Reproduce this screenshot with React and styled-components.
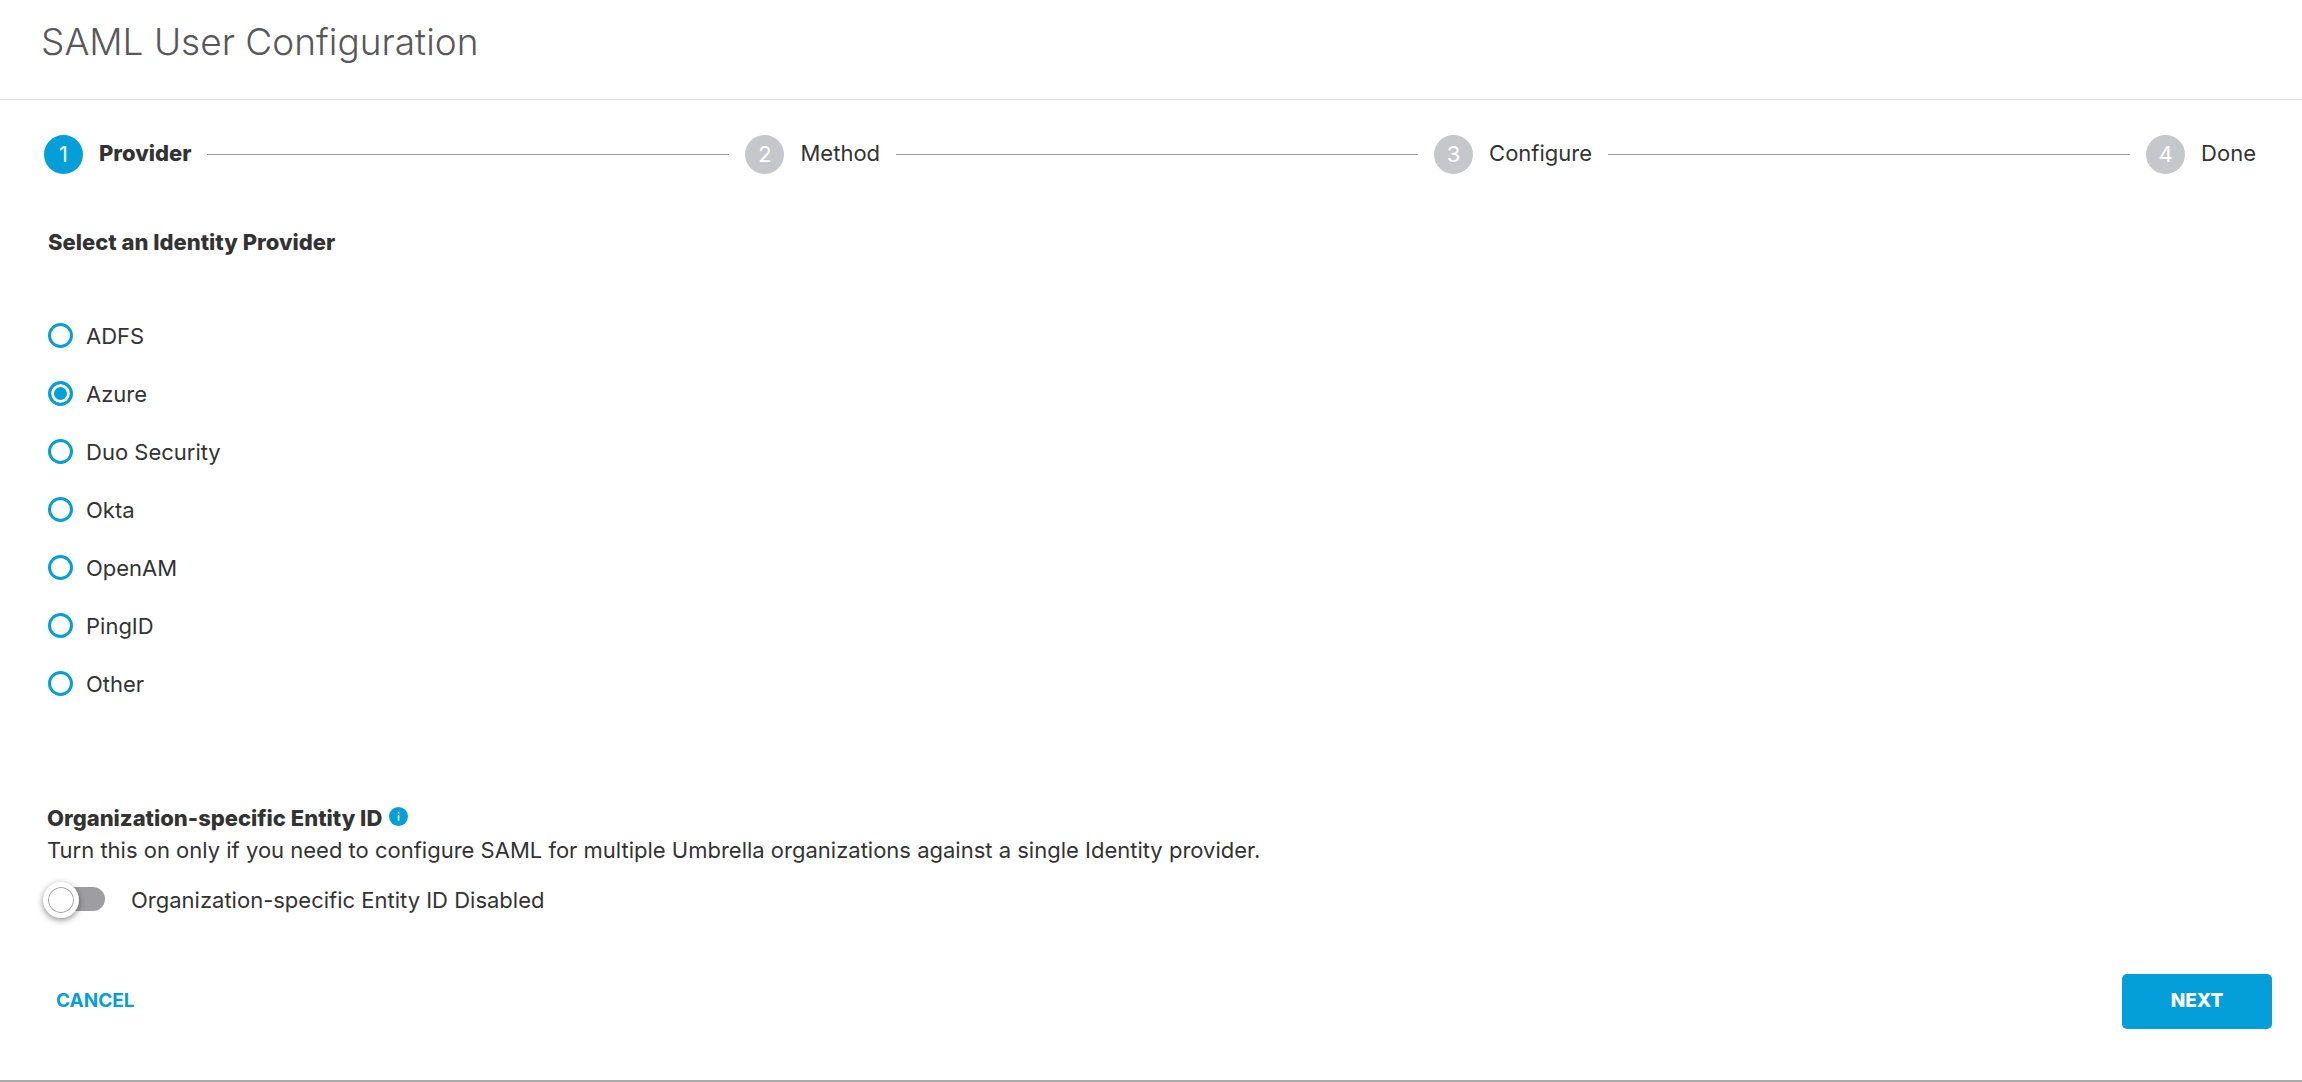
import React from 'react';
import styled, { createGlobalStyle } from 'styled-components';

const steps = [
    {key: "provider", text: "Provider"},
    {key: "method", text: "Method"},
    {key: "configure", text: "Configure"},
    {key: "done", text: "Done"}
]

const providers = [
    {key: "adfs", text: "ADFS"},
    {key: "azure", text: "Azure"},
    {key: "duo", text: "Duo Security"},
    {key: "okta", text: "Okta"},
    {key: "openam", text: "OpenAM"},
    {key: "pingid", text: "PingID"},
    {key: "other", text: "Other"}
]

const GlobalStyle = createGlobalStyle`
    *,
    *::before,
    *::after {
        box-sizing: border-box;
    }

    body {
        margin: 0;
        background: #fff;
        color: #333;
        font-family: Inter, "Liberation Sans", sans-serif;
        font-size: 22px;
        line-height: 32px;
    }
`

const Page = styled.main`
    display: flex;
    flex-direction: column;
    min-height: 100vh;
    border-bottom: 2px solid #aaa;
`

const Header = styled.header`
    padding: 18px 41px 33px;
    border-bottom: 1px solid #dfdfdf;
`

const Title = styled.h1`
    margin: 0;
    color: #58585b;
    font-size: 37px;
    font-weight: 300;
    line-height: 48px;
`

const Stepper = styled.ol`
    display: flex;
    align-items: center;
    gap: 16px;
    margin: 0;
    padding: 35px 46px 0 44px;
    list-style: none;
`

const StepItem = styled.li`
    display: flex;
    align-items: center;
    gap: 16px;
    flex: ${props => props.$last ? "none" : "1 1 auto"};
    font-weight: ${props => props.$active ? 800 : 400};

    &::after {
        content: ${props => props.$last ? "none" : '""'};
        flex: 1;
        height: 1px;
        background: #9e9ea2;
    }
`

const StepNumber = styled.span`
    display: flex;
    align-items: center;
    justify-content: center;
    width: 39px;
    height: 39px;
    padding-bottom: 2px;
    border-radius: 50%;
    background: ${props => props.$active ? "#049fd9" : "#c6c7ca"};
    color: #fff;
    font-weight: 400;
`

const StepText = styled.span`
    padding-bottom: 3px;
`

const Providers = styled.fieldset`
    margin: 52px 0 0;
    padding: 0 48px;
    border: 0;
`

const Legend = styled.legend`
    padding: 0;
    margin-bottom: 48px;
    font-weight: 800;
`

const ProviderLabel = styled.label`
    display: flex;
    align-items: center;
    gap: 13px;
    width: fit-content;
    height: 58px;
    cursor: pointer;
`

const LabelText = styled.span`
    padding-top: 2px;
`

const Radio = styled.input`
    appearance: none;
    width: 25px;
    height: 25px;
    margin: 0;
    border: 3px solid #049fd9;
    border-radius: 50%;
    cursor: pointer;

    &:checked {
        background: #049fd9;
        box-shadow: inset 0 0 0 3px #fff;
    }
`

const Entity = styled.section`
    padding: 90px 47px 0;
`

const EntityTitle = styled.h2`
    display: flex;
    align-items: center;
    gap: 7px;
    margin: 0;
    font-size: 22px;
    font-weight: 800;

    svg {
        margin-bottom: 3px;
    }
`

const Description = styled.p`
    margin: 0;
`

const ToggleLabel = styled.label`
    display: flex;
    align-items: center;
    gap: 26px;
    width: fit-content;
    margin-top: 16px;
    cursor: pointer;
`

const Toggle = styled.input`
    appearance: none;
    position: relative;
    width: 58px;
    height: 24px;
    margin: 0;
    border-radius: 12px;
    background: ${props => props.checked ? "#049fd9" : "#9e9ea2"};
    cursor: pointer;

    &::before {
        content: "";
        position: absolute;
        top: -5px;
        left: ${props => props.checked ? "26px" : "-4px"};
        width: 36px;
        height: 36px;
        border: 5px solid #fff;
        border-radius: 50%;
        background: #fff;
        box-shadow: inset 0 0 0 1px #9e9ea2, 0 2px 6px rgba(0, 0, 0, 0.45);
    }
`

const Actions = styled.footer`
    display: flex;
    align-items: center;
    justify-content: space-between;
    padding: 58px 30px 48px 41px;
`

const Button = styled.button`
    height: 55px;
    min-width: ${props => props.$primary ? "150px" : "0"};
    padding: 0 15px 2px;
    border: 0;
    border-radius: 5px;
    background: ${props => props.$primary ? "#049fd9" : "transparent"};
    color: ${props => props.$primary ? "#fff" : "#049fd9"};
    font-family: inherit;
    font-size: 19px;
    font-weight: ${props => props.$primary ? 800 : 700};
    cursor: pointer;
`

function InfoIcon() {
    return (
        <svg width="19" height="19" viewBox="0 0 19 19" aria-hidden="true">
            <circle cx="9.5" cy="9.5" r="9.5" fill="#049fd9" />
            <rect x="8.8" y="4.8" width="1.5" height="1.6" fill="#fff" />
            <rect x="8.8" y="7.8" width="1.5" height="6" fill="#fff" />
        </svg>
    );
}

/**
 * First step of the SAML wizard, where the identity provider is chosen.
 */
class App extends React.Component {
    state = {
        provider: "azure",
        entityEnabled: false
    }

    render() {
        let { provider, entityEnabled } = this.state;

        return (
            <Page>
                <GlobalStyle />
                <Header>
                    <Title>SAML User Configuration</Title>
                </Header>

                <Stepper>
                    {steps.map((step, i) => (
                        <StepItem key={step.key} $active={i === 0} $last={i === steps.length - 1}>
                            <StepNumber $active={i === 0}>{i + 1}</StepNumber>
                            <StepText>{step.text}</StepText>
                        </StepItem>
                    ))}
                </Stepper>

                <Providers>
                    <Legend>Select an Identity Provider</Legend>
                    {providers.map(item => (
                        <ProviderLabel key={item.key} htmlFor={item.key}>
                            <Radio
                                type="radio"
                                name="provider"
                                id={item.key}
                                checked={provider === item.key}
                                onChange={() => this.setState({provider: item.key})}
                            />
                            <LabelText>{item.text}</LabelText>
                        </ProviderLabel>
                    ))}
                </Providers>

                <Entity>
                    <EntityTitle>Organization-specific Entity ID <InfoIcon /></EntityTitle>
                    <Description>Turn this on only if you need to configure SAML for multiple Umbrella organizations against a single Identity provider.</Description>
                    <ToggleLabel htmlFor="entity">
                        <Toggle
                            type="checkbox"
                            id="entity"
                            checked={entityEnabled}
                            onChange={() => this.setState({entityEnabled: !entityEnabled})}
                        />
                        <LabelText>Organization-specific Entity ID {entityEnabled ? "Enabled" : "Disabled"}</LabelText>
                    </ToggleLabel>
                </Entity>

                <Actions>
                    <Button type="button">CANCEL</Button>
                    <Button type="button" $primary>NEXT</Button>
                </Actions>
            </Page>
        );
    }
}

export default App;
